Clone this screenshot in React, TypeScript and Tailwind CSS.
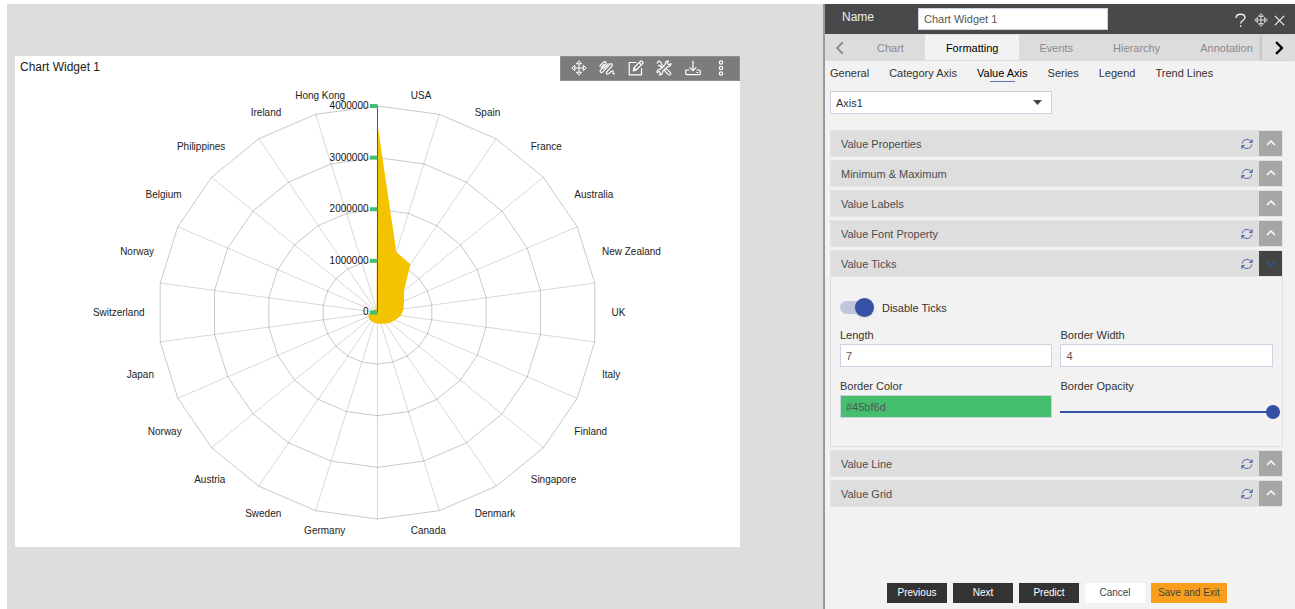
import React, { useState } from 'react';

interface IconProps {
  className?: string;
}

const MoveIcon: React.FC<IconProps> = ({ className }) => (
  <svg className={className} viewBox="0 0 16 16" fill="none" stroke="currentColor" strokeWidth="1" strokeLinejoin="round" strokeLinecap="round">
    <path d="M8 3.500v9M3.500 8h9" />
    <path d="M5.500 3.500 8 .8l2.500 2.700zM5.500 12.500 8 15.200l2.500-2.700zM3.500 5.500.8 8l2.700 2.500zM12.500 5.500 15.200 8l-2.700 2.500z" />
  </svg>
);

const ScribbleIcon: React.FC<IconProps> = ({ className }) => (
  <svg className={className} viewBox="0 0 16 16" fill="none" stroke="currentColor" strokeWidth="1.2" strokeLinejoin="round" strokeLinecap="round">
    <path d="M.8 6 4.600 2.200C6.200.8 8 2.600 6.600 4.300L1.600 10.200C.4 11.900 2.200 13.400 3.700 12L11 4.200C12.600 2.800 14.200 4.600 12.900 6.200L7.900 11.700C6.700 13.400 8.300 14.900 9.800 13.600L12.300 11.200C13.500 10.200 14.400 11.200 14 12.200 13.600 13.300 14.300 14 15.400 13.700" />
    <path d="M5 4.500 2 7.600M9.300 3.800 4.700 8.600" />
  </svg>
);

const EditIcon: React.FC<IconProps> = ({ className }) => (
  <svg className={className} viewBox="0 0 16 16" fill="none" stroke="currentColor" strokeWidth="1.2" strokeLinejoin="round" strokeLinecap="round">
    <path d="M8 2.500H1.200v12.300h12.300V8.500" />
    <path d="m5.200 10.800.8-3.100 6.400-6.300c.5-.5 1.100-.5 1.600 0l.6.6c.5.5.5 1.100 0 1.600L8.200 10zM11.200 2.600l2.200 2.200M6 7.700 8.200 10" />
  </svg>
);

const ToolsIcon: React.FC<IconProps> = ({ className }) => (
  <svg className={className} viewBox="0 0 16 16" fill="none" stroke="currentColor" strokeWidth="1.1" strokeLinejoin="round" strokeLinecap="round">
    <path d="M1 3 3 1l2.200 1.500.3 1.600L8 6.600M6.600 8 4.100 5.500l-1.600-.3z" />
    <path d="m9 9.400 1.300-.8 4.100 4c1.200 1.300-.7 3.200-2 2l-4-4.100z" />
    <path d="M14.800 3.500 12.900 5l-2-2L12.600 1.100C10.500.5 8.700 2.200 9.200 4.300L4.200 9.400C2.200 8.900.5 10.800 1.100 12.800L2.900 11.200l1.900 1.900-1.700 1.700c2.100.6 4-1.200 3.500-3.300l5.100-5c2.100.4 3.700-1.100 3.100-3z" />
  </svg>
);

const DownloadIcon: React.FC<IconProps> = ({ className }) => (
  <svg className={className} viewBox="0 0 16 16" fill="none" stroke="currentColor" strokeWidth="1.2" strokeLinejoin="round" strokeLinecap="round">
    <path d="M8 1v9.500M5 7.700l3 3 3-3" />
    <path d="M4 10H1.800C1 10 .7 10.400.7 11v2.600c0 .7.4 1.100 1.100 1.100h12.400c.7 0 1.100-.4 1.100-1.100V11c0-.6-.3-1-1.100-1H12M11.800 12.500h1" />
  </svg>
);

const DotsIcon: React.FC<IconProps> = ({ className }) => (
  <svg className={className} viewBox="0 0 16 16" fill="none" stroke="currentColor" strokeWidth="1.2">
    <circle cx="8" cy="2.500" r="1.700" />
    <circle cx="8" cy="8" r="1.700" />
    <circle cx="8" cy="13.500" r="1.700" />
  </svg>
);

const HelpIcon: React.FC<IconProps> = ({ className }) => (
  <svg className={className} viewBox="0 0 16 16" fill="none" stroke="currentColor" strokeWidth="1.500">
    <path d="M3.300 5.200C3.300 2.700 5.200 1.300 8 1.300s4.700 1.400 4.700 3.600c0 3.300-4.500 2.900-4.500 6.400" />
    <path d="M8.200 13v1.800" />
  </svg>
);

const CloseIcon: React.FC<IconProps> = ({ className }) => (
  <svg className={className} viewBox="0 0 12 12" fill="none" stroke="currentColor" strokeWidth="1.300">
    <path d="m1 1 10 10M11 1 1 11" />
  </svg>
);

const RefreshIcon: React.FC<IconProps> = ({ className }) => (
  <svg className={className} viewBox="0 0 12 12" fill="none" stroke="currentColor" strokeWidth="1">
    <path d="M1.300 5.500C1.500 3 3.500 1.500 6 1.500c1.700 0 3 .7 3.900 2M10.700 6.500c-.2 2.500-2.200 4-4.700 4-1.700 0-3-.7-3.900-2" />
    <path d="M11 1.500v3H8.500M1 10.500v-3h2.500" />
    <path d="M11.500 1v4L8 4.500zM.5 11V7L4 7.500z" fill="currentColor" stroke="none" opacity="0.7" />
  </svg>
);

interface ChevronProps extends IconProps {
  d: string;
  strokeWidth?: number;
}

const Chevron: React.FC<ChevronProps> = ({ d, strokeWidth = 1.5, className }) => (
  <svg className={className} viewBox="0 0 12 12" fill="none" stroke="currentColor" strokeWidth={strokeWidth}>
    <path d={d} />
  </svg>
);

const COUNTRIES = [
  'USA', 'Spain', 'France', 'Australia', 'New Zealand', 'UK', 'Italy', 'Finland',
  'Singapore', 'Denmark', 'Canada', 'Germany', 'Sweden', 'Austria', 'Norway', 'Japan',
  'Switzerland', 'Norway', 'Belgium', 'Philippines', 'Ireland', 'Hong Kong',
];

const VALUES = [
  3640000, 1220000, 1110000, 640000, 532000, 480000, 430000, 356000, 304000, 260000, 228000,
  214000, 208000, 204000, 196000, 184000, 160000, 100000, 90000, 84000, 76000, 60000,
];

const MAX_VALUE = 4000000;
const AXIS_STEPS = [0, 1000000, 2000000, 3000000, 4000000];
const CX = 362.5;
const CY = 231.5;
const RX = 219.5;
const RY = 206.5;

const pointAt = (index: number, ratio: number, rx = RX, ry = RY) => {
  const angle = (index / COUNTRIES.length) * Math.PI * 2;
  return { x: CX + Math.sin(angle) * rx * ratio, y: CY - Math.cos(angle) * ry * ratio };
};

const toPoints = (ratios: number[]) =>
  ratios
    .map((ratio, i) => {
      const p = pointAt(i, ratio);
      return `${p.x.toFixed(2)},${p.y.toFixed(2)}`;
    })
    .join(' ');

const RadarChart: React.FC = () => (
  <svg viewBox="0 0 725 466" className="block w-full font-['Liberation_Sans',Arial,sans-serif] text-[10px]" role="img" aria-label="Radar chart by country">
    <g fill="none" stroke="#000" strokeOpacity="0.16">
      {COUNTRIES.map((_, i) => {
        const p = pointAt(i, 1);
        return <line key={i} x1={CX} y1={CY} x2={p.x} y2={p.y} />;
      })}
      {AXIS_STEPS.slice(1).map((step) => (
        <polygon key={step} points={toPoints(COUNTRIES.map(() => step / MAX_VALUE))} strokeOpacity="0.22" />
      ))}
    </g>
    <polygon points={toPoints(VALUES.map((v) => v / MAX_VALUE))} fill="#f3c300" />
    <line x1={CX} y1={CY} x2={CX} y2={CY - RY} stroke="#555" />
    {AXIS_STEPS.map((step) => {
      const y = CY - (RY * step) / MAX_VALUE;
      return (
        <g key={step}>
          <line x1={CX - 7.5} x2={CX} y1={y} y2={y} stroke="#45bf6d" strokeWidth="4" />
          <text x={CX - 9} y={y + 3} textAnchor="end" fill="#111">{step}</text>
        </g>
      );
    })}
    {COUNTRIES.map((name, i) => {
      const p = pointAt(i + 0.5, 1, 234, 220);
      const onRight = i < COUNTRIES.length / 2;
      return (
        <text key={i} x={onRight ? p.x : p.x + 1} y={p.y + 4} textAnchor={onRight ? 'start' : 'end'} fill="#222">{name}</text>
      );
    })}
  </svg>
);

const TOOLBAR = [
  { label: 'Move', Icon: MoveIcon },
  { label: 'Draw', Icon: ScribbleIcon },
  { label: 'Edit', Icon: EditIcon },
  { label: 'Settings', Icon: ToolsIcon },
  { label: 'Download', Icon: DownloadIcon },
  { label: 'More', Icon: DotsIcon },
];

const ChartWidget: React.FC = () => (
  <section className="bg-white">
    <header className="flex h-[25px] justify-between">
      <h2 className="pl-[5px] pt-[3px] text-xs text-[#222]">Chart Widget 1</h2>
      <div className="flex w-[180px] items-center justify-between border border-[#8f8f8f] bg-[#7c7c7c] px-[10px] pb-[2px] text-white">
        {TOOLBAR.map(({ label, Icon }) => (
          <button key={label} type="button" aria-label={label}>
            <Icon className="size-4" />
          </button>
        ))}
      </div>
    </header>
    <RadarChart />
  </section>
);

interface SectionProps {
  title: string;
  refresh?: boolean;
  open?: boolean;
  children?: React.ReactNode;
}

const Section: React.FC<SectionProps> = ({ title, refresh = true, open = false, children }) => (
  <section>
    <div className="flex h-[27px] items-stretch border border-[#e3e3e3] bg-[#dedede]">
      <h3 className="flex-1 self-center pl-[10px] text-[#4c4c4c]">{title}</h3>
      {refresh && (
        <button type="button" aria-label={`Reset ${title}`} className="mr-[6px] text-[#5264ae]">
          <RefreshIcon className="size-3" />
        </button>
      )}
      <button
        type="button"
        aria-label={`Toggle ${title}`}
        aria-expanded={open}
        className={`flex w-[23px] items-center justify-center ${open ? 'bg-[#444] text-[#3550a4]' : 'bg-[#a6a6a6] text-white'}`}
      >
        <Chevron className="size-3" d={open ? 'm2 4 4 4 4-4' : 'm2 7 4-4 4 4'} />
      </button>
    </div>
    {children}
  </section>
);

const fieldClass = 'h-[23px] w-full border border-[#cbd3e2] px-[5px] text-[#555] outline-none';

const TicksForm: React.FC = () => {
  const [disabled, setDisabled] = useState(true);
  const [length, setLength] = useState('7');
  const [borderWidth, setBorderWidth] = useState('4');
  const [color, setColor] = useState('#45bf6d');
  const [opacity, setOpacity] = useState(100);

  return (
    <div className="border border-t-0 border-[#dfdfdf] px-[9px] pb-[27px] pt-[21px] text-[#333]">
      <label className="flex h-[19px] items-center gap-[10px]">
        <input
          type="checkbox"
          checked={disabled}
          onChange={(e) => setDisabled(e.target.checked)}
          className="relative h-[13px] w-8 appearance-none rounded-full bg-[#c0c6de] after:absolute after:-top-[3px] after:left-0 after:size-[19px] after:rounded-full after:bg-white after:shadow checked:after:left-[15px] checked:after:bg-[#3550a4]"
        />
        Disable Ticks
      </label>
      <div className="mt-[9px] grid grid-cols-2 gap-x-2 gap-y-[10px]">
        <label className="block leading-[18px]">
          Length
          <input type="text" value={length} onChange={(e) => setLength(e.target.value)} className={`${fieldClass} bg-white`} />
        </label>
        <label className="block leading-[18px]">
          Border Width
          <input type="text" value={borderWidth} onChange={(e) => setBorderWidth(e.target.value)} className={`${fieldClass} bg-white`} />
        </label>
        <label className="block leading-[18px]">
          Border Color
          <input type="text" value={color} onChange={(e) => setColor(e.target.value)} className={`${fieldClass} bg-[#45bf6d]`} />
        </label>
        <label className="block leading-[18px]">
          Border Opacity
          <span className="-mr-[7px] flex pt-[10px]">
            <input
              type="range"
              min={0}
              max={100}
              value={opacity}
              onChange={(e) => setOpacity(Number(e.target.value))}
              className="h-[14px] w-full appearance-none bg-transparent [&::-webkit-slider-runnable-track]:h-[2px] [&::-webkit-slider-runnable-track]:bg-[#3550a4] [&::-webkit-slider-thumb]:-mt-[6px] [&::-webkit-slider-thumb]:size-[14px] [&::-webkit-slider-thumb]:appearance-none [&::-webkit-slider-thumb]:rounded-full [&::-webkit-slider-thumb]:bg-[#3550a4]"
            />
          </span>
        </label>
      </div>
    </div>
  );
};

const TABS = ['Chart', 'Formatting', 'Events', 'Hierarchy', 'Annotation'];
const SUB_TABS = ['General', 'Category Axis', 'Value Axis', 'Series', 'Legend', 'Trend Lines'];

const SettingsPanel: React.FC = () => {
  const [name, setName] = useState('Chart Widget 1');

  return (
    <aside className="flex w-[36.45%] min-w-[440px] shrink-0 flex-col border-l-2 border-[#999] bg-[#f2f2f2] text-[11px] leading-4">
      <header className="flex h-[30px] items-center bg-[#494949] text-[#eee]">
        <label htmlFor="widget-name" className="w-[93px] pb-1 pl-[17px] text-xs">Name</label>
        <input
          id="widget-name"
          type="text"
          value={name}
          onChange={(e) => setName(e.target.value)}
          className="h-[22px] w-[190px] border border-[#cbd3e2] bg-white px-[5px] text-[#555] outline-none"
        />
        <div className="ml-auto flex items-center gap-[6px] pr-[10px] pt-[2px]">
          <button type="button" aria-label="Help"><HelpIcon className="size-[15px]" /></button>
          <button type="button" aria-label="Move panel"><MoveIcon className="size-[14px]" /></button>
          <button type="button" aria-label="Close"><CloseIcon className="size-[11px]" /></button>
        </div>
      </header>

      <nav className="flex h-[27px] border-b border-t border-[#dedede] bg-[#dcdcdc] text-[#8a8a8a]">
        <button type="button" aria-label="Previous tabs" className="flex w-[31px] shrink-0 items-center justify-center">
          <Chevron className="size-[14px]" d="M8.500 1 3.500 6l5 5" strokeWidth={1.6} />
        </button>
        <div className="flex min-w-0 flex-1 overflow-hidden">
          {TABS.map((tab) => (
            <button
              key={tab}
              type="button"
              className={`shrink-0 ${tab === 'Formatting' ? 'bg-[#f2f2f2] px-[21px] text-black' : 'px-5 first:px-[21px]'}`}
            >
              {tab}
            </button>
          ))}
        </div>
        <button type="button" aria-label="Next tabs" className="flex w-[33px] shrink-0 items-center justify-center text-black shadow-[-2px_0_3px_rgba(0,0,0,0.12)]">
          <Chevron className="size-[14px]" d="m3.500 1 5 5-5 5" strokeWidth={2} />
        </button>
      </nav>

      <div className="flex-1 pl-[5px] pr-3">
        <nav className="flex h-[22px] items-start gap-5 pt-1 text-[#333]">
          {SUB_TABS.map((tab) => (
            <button
              key={tab}
              type="button"
              className={tab === 'Value Axis' ? 'relative text-black after:absolute after:-bottom-px after:left-1/4 after:h-px after:w-1/2 after:bg-[#5f73bd]' : ''}
            >
              {tab}
            </button>
          ))}
        </nav>

        <div className="relative mt-2 w-[49%]">
          <select aria-label="Axis" defaultValue="Axis1" className="block h-[23px] w-full appearance-none border border-[#cbd3e2] bg-white px-[5px] text-[#333] outline-none">
            <option>Axis1</option>
          </select>
          <svg className="pointer-events-none absolute right-[10px] top-[9px] h-[5px] w-[9px]" viewBox="0 0 9 5" fill="#444">
            <path d="M0 0h9L4.500 5z" />
          </svg>
        </div>

        <div className="mt-4 flex flex-col gap-[3px]">
          <Section title="Value Properties" />
          <Section title="Minimum &amp; Maximum" />
          <Section title="Value Labels" refresh={false} />
          <Section title="Value Font Property" />
          <Section title="Value Ticks" open>
            <TicksForm />
          </Section>
          <Section title="Value Line" />
          <Section title="Value Grid" />
        </div>
      </div>

      <footer className="flex justify-center gap-[6px] pb-[6px] pr-[6px] text-[10px]">
        {['Previous', 'Next', 'Predict'].map((label) => (
          <button key={label} type="button" className="h-5 w-[60px] bg-[#333] text-white">{label}</button>
        ))}
        <button type="button" className="h-5 w-[60px] bg-white text-[#444]">Cancel</button>
        <button type="button" className="h-5 w-[76px] bg-[#f99d1c] text-[#444]">Save and Exit</button>
      </footer>
    </aside>
  );
};

const App: React.FC = () => (
  <div className="flex min-h-screen bg-white pt-[4px] font-['Liberation_Sans',Arial,sans-serif]">
    <main className="ml-[7px] min-w-0 flex-1 bg-[#ddd] pl-2 pr-[83px] pt-[52px]">
      <ChartWidget />
    </main>
    <SettingsPanel />
  </div>
);

export default App;
